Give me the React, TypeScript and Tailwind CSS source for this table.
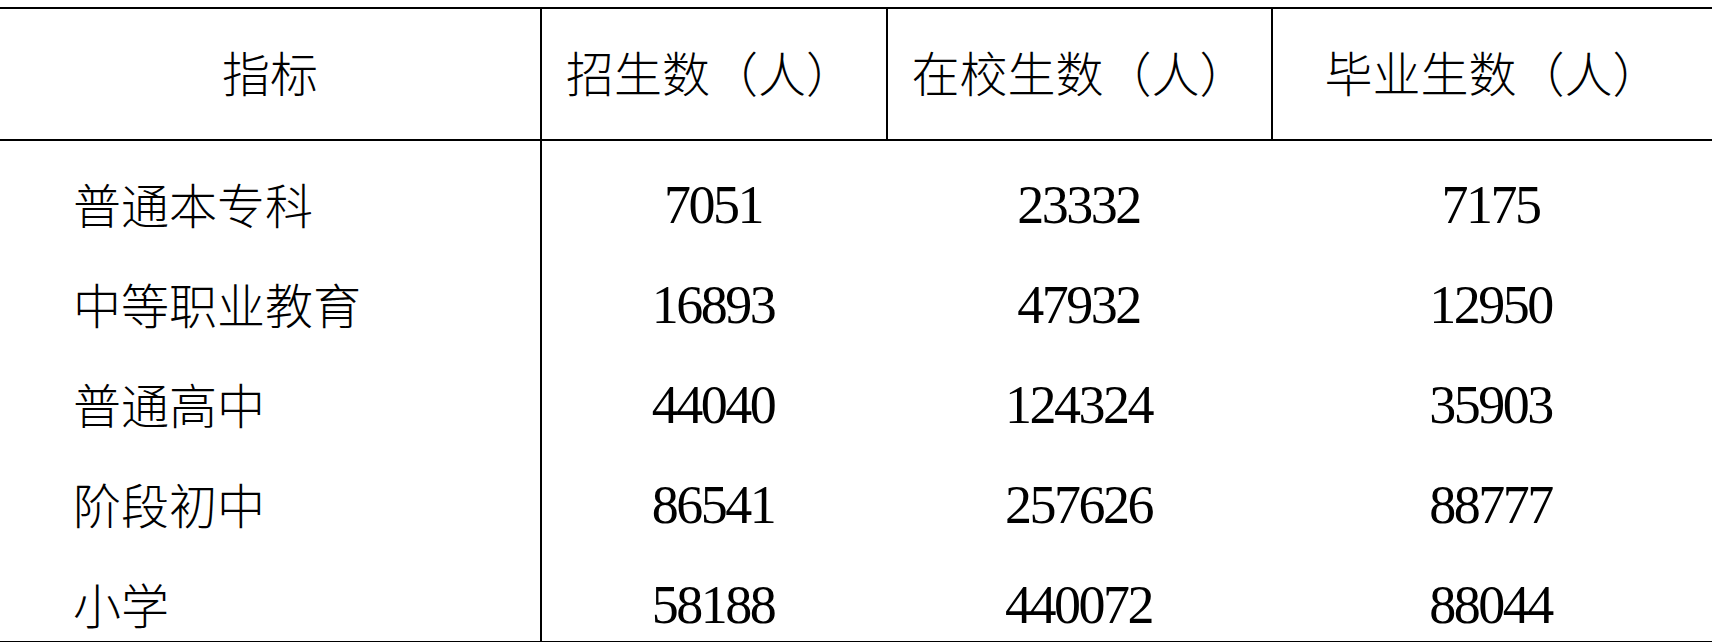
import React from "react";

const rows: [string, string, string, string][] = [
  ["普通本专科", "7051", "23332", "7175"],
  ["中等职业教育", "16893", "47932", "12950"],
  ["普通高中", "44040", "124324", "35903"],
  ["阶段初中", "86541", "257626", "88777"],
  ["小学", "58188", "440072", "88044"],
];

const cjk = { fontFamily: '"Noto Sans CJK SC", "Noto Sans", sans-serif' };
const num = { fontFamily: '"Liberation Serif", "Times New Roman", serif' };

export default function App() {
  return (
    <div className="w-[1712px] h-[642px] overflow-hidden bg-white pt-[7px] text-black">
      <div className="border-t-2 border-black">
        <div
          className="grid grid-cols-[542px_346px_385px_1fr] h-[132px] border-b-2 border-black text-[48px] font-light"
          style={cjk}
        >
          <div className="border-r-2 border-black flex items-center justify-center pb-[6px]">指标</div>
          <div className="border-r-2 border-black flex items-center justify-center pb-[6px] pr-[8px]">招生数（人）</div>
          <div className="border-r-2 border-black flex items-center justify-center pb-[6px]">在校生数（人）</div>
          <div className="flex items-center justify-center pb-[6px]">毕业生数（人）</div>
        </div>
        <div className="grid grid-cols-[542px_346px_385px_1fr] h-[502px] border-b-2 border-black overflow-hidden">
          <div className="border-r-2 border-black pt-[14px] pl-[73px] flex flex-col text-[48px] font-light" style={cjk}>
            {rows.map((r) => (
              <div key={r[0]} className="h-[100px] shrink-0 flex items-center pb-[5px]">
                {r[0]}
              </div>
            ))}
          </div>
          {[1, 2, 3].map((c) => (
            <div key={c} className="pt-[14px] flex flex-col text-[54px] tracking-[-2.5px]" style={num}>
              {rows.map((r) => (
                <div key={r[0]} className="h-[100px] shrink-0 flex items-center justify-center pr-[4px]">
                  {r[c]}
                </div>
              ))}
            </div>
          ))}
        </div>
      </div>
    </div>
  );
}
